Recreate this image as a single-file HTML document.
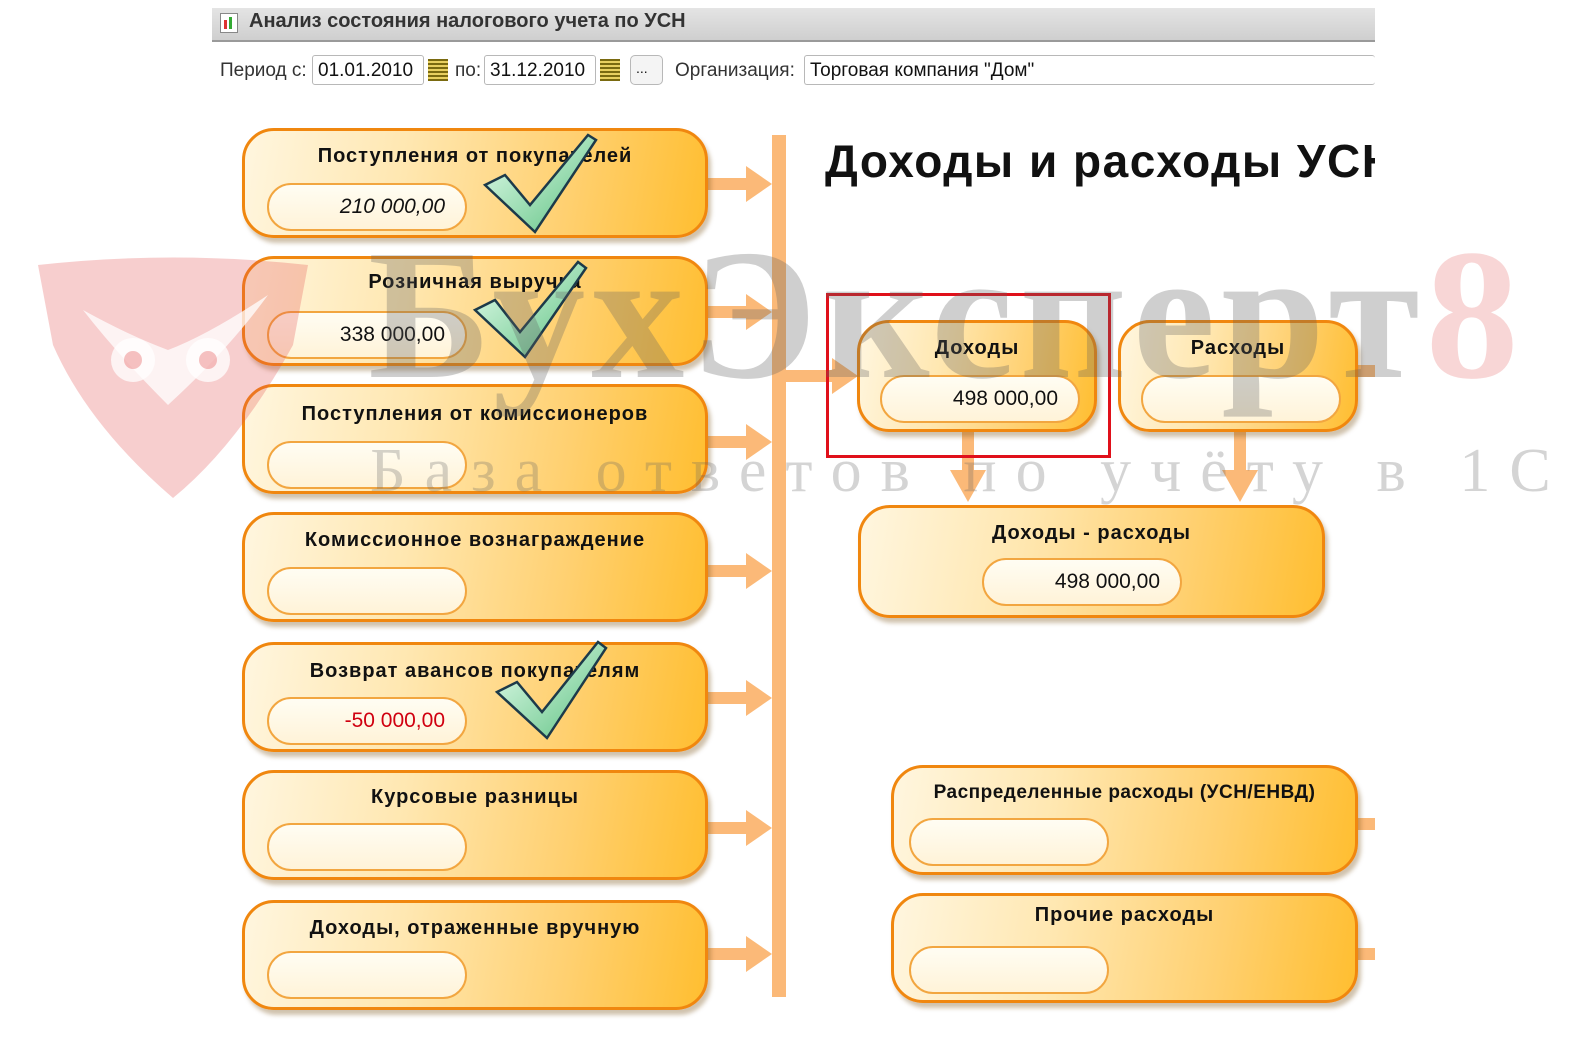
<!DOCTYPE html>
<html style="overflow:hidden"><head><meta charset="utf-8"><style>
html,body{overflow:hidden}
body{margin:0;width:1582px;height:1037px;background:#fff;position:relative;font-family:"Liberation Sans",sans-serif}
.a{position:absolute}
.box{position:absolute;border:3px solid #f0870f;border-radius:32px;background:linear-gradient(100deg,#fff6df 0%,#ffe7b0 35%,#ffd070 70%,#ffbe30 100%);box-shadow:3px 5px 4px rgba(120,80,20,.35);box-sizing:border-box}
.box .t{position:absolute;left:0;right:0;top:14px;text-align:center;font-weight:bold;font-size:20px;letter-spacing:1px;color:#111;font-family:"Liberation Sans",sans-serif}
.fld{position:absolute;height:48px;width:200px;border:2px solid #f2a640;border-radius:25px;background:linear-gradient(180deg,#fffdf3,#fff3d8);box-sizing:border-box;font-size:21px;line-height:44px;text-align:right;padding-right:20px;color:#111;font-family:"Liberation Sans Narrow","Liberation Sans",sans-serif}
.arr{position:absolute;height:12px;background:#fbb978}
.arr:after{content:"";position:absolute;right:-22px;top:-12px;border-left:26px solid #fbb978;border-top:18px solid transparent;border-bottom:18px solid transparent}
.inp{position:absolute;top:55px;height:30px;border:1px solid #b8b8b8;border-radius:3px;background:#fff;font-size:19px;line-height:30px;padding-left:5px;box-sizing:border-box;color:#111;overflow:hidden;white-space:nowrap}
.cal{position:absolute;top:59px;width:20px;height:22px;background:repeating-linear-gradient(180deg,#7a6a10 0 2px,#e8d060 2px 4px)}
</style></head><body>
<div class="a" style="left:212px;top:8px;width:1163px;height:32px;background:linear-gradient(#e4e4e4,#cfcfcf);border-bottom:2px solid #9a9a9a"></div>
<div class="a" style="left:220px;top:13px;width:16px;height:18px;border:1px solid #888;background:#fff"></div>
<div class="a" style="left:224px;top:20px;width:3px;height:9px;background:#d33"></div><div class="a" style="left:229px;top:17px;width:3px;height:12px;background:#3a3"></div>
<div class="a" style="left:249px;top:10px;font-size:20px;font-weight:bold;color:#333">Анализ состояния налогового учета по УСН</div>
<div class="a" style="left:220px;top:60px;font-size:19px;color:#333">Период с:</div>
<div class="inp" style="left:312px;width:112px">01.01.2010</div><div class="cal" style="left:428px"></div>
<div class="a" style="left:455px;top:60px;font-size:19px;color:#333">по:</div>
<div class="inp" style="left:484px;width:112px">31.12.2010</div><div class="cal" style="left:600px"></div>
<div class="inp" style="left:630px;width:33px;border-radius:5px;background:#f4f4f4;line-height:24px;font-size:14px">...</div>
<div class="a" style="left:675px;top:60px;font-size:19px;color:#333">Организация:</div>
<div class="inp" style="left:804px;width:571px;border-right:none">Торговая компания "Дом"</div>

<div class="a" style="left:772px;top:135px;width:14px;height:862px;background:#fbb978"></div>
<div class="arr" style="left:708px;top:178px;width:42px"></div>
<div class="arr" style="left:708px;top:306px;width:42px"></div>
<div class="arr" style="left:708px;top:436px;width:42px"></div>
<div class="arr" style="left:708px;top:565px;width:42px"></div>
<div class="arr" style="left:708px;top:692px;width:42px"></div>
<div class="arr" style="left:708px;top:822px;width:42px"></div>
<div class="arr" style="left:708px;top:948px;width:42px"></div>
<div class="arr" style="left:786px;top:370px;width:50px"></div>
<div class="a" style="left:962px;top:432px;width:12px;height:40px;background:#fbb978"></div>
<div class="a" style="left:950px;top:470px;border-top:32px solid #fbb978;border-left:18px solid transparent;border-right:18px solid transparent"></div>
<div class="a" style="left:1234px;top:432px;width:12px;height:40px;background:#fbb978"></div>
<div class="a" style="left:1222px;top:470px;border-top:32px solid #fbb978;border-left:18px solid transparent;border-right:18px solid transparent"></div>
<div class="a" style="left:1358px;top:365px;width:17px;height:12px;background:#fbb978"></div>
<div class="a" style="left:1358px;top:818px;width:17px;height:12px;background:#fbb978"></div>
<div class="a" style="left:1358px;top:948px;width:17px;height:12px;background:#fbb978"></div>

<div class="box" style="left:242px;top:128px;width:466px;height:110px"><div class="t">Поступления от покупателей</div><div class="fld" style="left:22px;top:52px;font-style:italic">210 000,00</div></div>
<div class="box" style="left:242px;top:256px;width:466px;height:110px"><div class="t" style="top:12px">Розничная выручка</div><div class="fld" style="left:22px;top:52px">338 000,00</div></div>
<div class="box" style="left:242px;top:384px;width:466px;height:110px"><div class="t" style="top:16px">Поступления от комиссионеров</div><div class="fld" style="left:22px;top:54px"></div></div>
<div class="box" style="left:242px;top:512px;width:466px;height:110px"><div class="t" style="top:14px">Комиссионное вознаграждение</div><div class="fld" style="left:22px;top:52px"></div></div>
<div class="box" style="left:242px;top:642px;width:466px;height:110px"><div class="t" style="top:15px">Возврат авансов покупателям</div><div class="fld" style="left:22px;top:52px;color:#d00010">-50 000,00</div></div>
<div class="box" style="left:242px;top:770px;width:466px;height:110px"><div class="t" style="top:13px">Курсовые разницы</div><div class="fld" style="left:22px;top:50px"></div></div>
<div class="box" style="left:242px;top:900px;width:466px;height:110px"><div class="t" style="top:14px">Доходы, отраженные вручную</div><div class="fld" style="left:22px;top:48px"></div></div>

<svg class="a" style="left:0;top:0" width="1582" height="1037">
<defs><linearGradient id="g" x1="0" y1="0" x2="1" y2="1"><stop offset="0" stop-color="#e8fff0"/><stop offset="1" stop-color="#5cc080"/></linearGradient></defs>
<g stroke="#1d3a4a" stroke-width="2.5" fill="url(#g)">
<path d="M485 185 L505 175 L530 205 L588 135 L596 140 L535 232 Z"/>
<path d="M475 310 L495 300 L520 332 L578 262 L586 268 L525 357 Z"/>
<path d="M497 692 L517 682 L542 712 L598 642 L606 648 L547 738 Z"/>
</g></svg>

<div class="a" style="left:825px;top:134px;width:550px;overflow:hidden;white-space:nowrap;font-size:46px;letter-spacing:1.5px;font-weight:bold;color:#111">Доходы и расходы УСН</div>

<div class="box" style="left:857px;top:320px;width:240px;height:112px"><div class="t">Доходы</div><div class="fld" style="left:20px;top:52px">498 000,00</div></div>
<div class="box" style="left:1118px;top:320px;width:240px;height:112px"><div class="t">Расходы</div><div class="fld" style="left:20px;top:52px"></div></div>
<div class="a" style="left:826px;top:293px;width:285px;height:165px;border:3px solid #e0101a;box-sizing:border-box"></div>
<div class="box" style="left:858px;top:505px;width:467px;height:113px"><div class="t">Доходы - расходы</div><div class="fld" style="left:121px;top:50px">498 000,00</div></div>
<div class="box" style="left:891px;top:765px;width:467px;height:110px"><div class="t" style="font-size:19px;letter-spacing:.5px">Распределенные расходы (УСН/ЕНВД)</div><div class="fld" style="left:15px;top:50px"></div></div>
<div class="box" style="left:891px;top:893px;width:467px;height:110px"><div class="t" style="top:8px">Прочие расходы</div><div class="fld" style="left:15px;top:50px"></div></div>

<svg class="a" style="left:38px;top:255px" width="270" height="245"><path d="M0 10 Q135 -5 270 10 L255 90 Q200 190 135 243 Q50 170 15 90 Z" fill="rgba(225,80,80,.28)"/>
<g fill="rgba(255,255,255,.75)"><circle cx="95" cy="105" r="22"/><circle cx="170" cy="105" r="22"/><path d="M45 55 Q90 80 130 95 Q170 80 230 40 Q190 95 130 150 Q80 100 45 55Z"/></g>
<g fill="rgba(225,80,80,.35)"><circle cx="95" cy="105" r="9"/><circle cx="170" cy="105" r="9"/></g></svg>
<div class="a" style="left:368px;top:222px;font-family:'Liberation Serif',serif;font-weight:bold;font-size:186px;line-height:186px;color:rgba(95,95,95,.3);white-space:nowrap;letter-spacing:6px">БухЭксперт<span style="color:rgba(225,70,70,.22)">8</span></div>
<div class="a" style="left:370px;top:436px;font-family:'Liberation Serif',serif;font-size:62px;color:rgba(100,100,100,.28);letter-spacing:19px;white-space:nowrap">База ответов по учёту в 1С</div>
</body></html>
